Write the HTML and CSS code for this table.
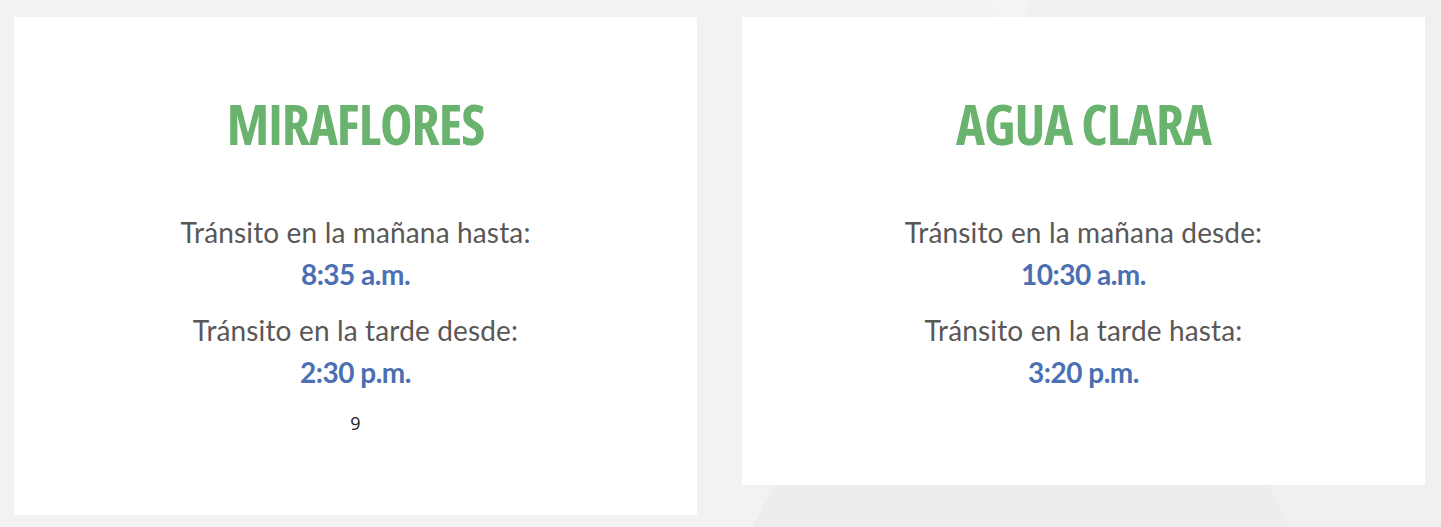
FILE: index.html
```html
<!DOCTYPE html>
<html lang="es">
<head>
<meta charset="utf-8">
<title>Horarios de tránsito</title>
<link rel="stylesheet" href="styles.css">
</head>
<body>
<main class="page">
  <section class="card card--left">
    <h2 class="card__title">MIRAFLORES</h2>
    <p class="info">
      <span class="info__label">Tránsito en la mañana hasta:</span>
      <span class="info__time">8:35 a.m.</span>
    </p>
    <p class="info">
      <span class="info__label">Tránsito en la tarde desde:</span>
      <span class="info__time">2:30 p.m.</span>
    </p>
    <div class="note">9</div>
  </section>
  <section class="card card--right">
    <h2 class="card__title">AGUA CLARA</h2>
    <p class="info">
      <span class="info__label">Tránsito en la mañana desde:</span>
      <span class="info__time">10:30 a.m.</span>
    </p>
    <p class="info">
      <span class="info__label">Tránsito en la tarde hasta:</span>
      <span class="info__time">3:20 p.m.</span>
    </p>
  </section>
</main>
</body>
</html>
```
FILE: styles.css
```css
html, body {
  margin: 0;
  padding: 0;
}

body {
  min-height: 527px;
  font-family: "Lato", "Open Sans", sans-serif;
  background-color: #ededed;
  background-image:
    linear-gradient(118deg, rgba(255,255,255,0.28) 0 60%, rgba(255,255,255,0) 60%),
    linear-gradient(60deg, rgba(255,255,255,0) 0 74%, rgba(255,255,255,0.18) 74% 100%);
}

.page {
  display: flex;
  align-items: flex-start;
  gap: 45px;
  padding: 17px 0 0 14px;
}

.card {
  width: 683px;
  box-sizing: border-box;
  background: #ffffff;
  text-align: center;
  padding: 77px 0 78px;
}

.card__title {
  margin: 0;
  font-family: "Open Sans", sans-serif;
  font-size: 55px;
  line-height: 60px;
  font-weight: 700;
  font-stretch: 75%;
  letter-spacing: -1px;
  color: #69b36e;
}

.card__title + .info {
  margin-top: 57px;
}

.info {
  margin: 0 0 14px;
  font-size: 28px;
  line-height: 42px;
}

.info__label {
  display: block;
  font-weight: 400;
  letter-spacing: 0.15px;
  color: #5a5757;
}

.info__time {
  display: block;
  font-weight: 700;
  letter-spacing: -0.5px;
  color: #4a6fb2;
}

.note {
  padding-top: 3px;
  font-family: "Open Sans", sans-serif;
  font-size: 18px;
  line-height: 27px;
  color: #222222;
}
```
